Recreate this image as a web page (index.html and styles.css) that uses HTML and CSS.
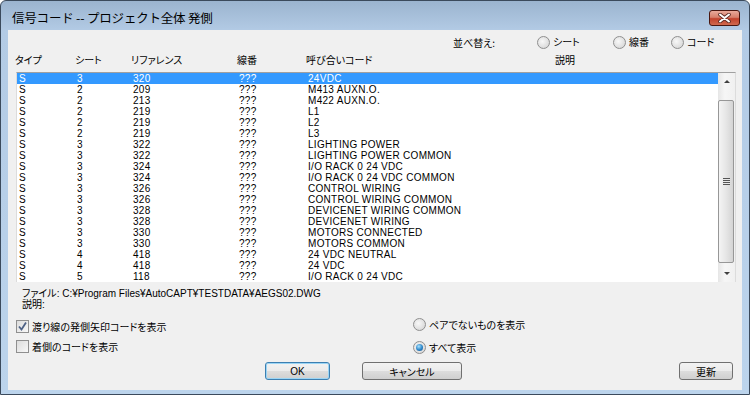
FILE: index.html
```html
<!DOCTYPE html>
<html lang="ja">
<head>
<meta charset="UTF-8">
<title>信号コード -- プロジェクト全体 発側</title>
<link rel="stylesheet" href="styles.css">
</head>
<body>
<div class="window">
    <div class="titlebar">
        <span class="title">信号コード -- プロジェクト全体 発側</span>
        <span class="close">
            <svg width="13" height="10" viewBox="0 0 13 10">
                <path d="M2 1.5 L11 8.5 M11 1.5 L2 8.5" stroke="#5a2a24" stroke-width="3.6" stroke-linecap="round"/>
                <path d="M2 1.5 L11 8.5 M11 1.5 L2 8.5" stroke="#ffffff" stroke-width="2" stroke-linecap="round"/>
            </svg>
        </span>
    </div>

    <div class="client">
        <div class="sortbar">
            <span class="sort-label">並べ替え:</span>
            <span class="radio sort-sheet"><span class="dot"></span>シート</span>
            <span class="radio sort-wire"><span class="dot"></span>線番</span>
            <span class="radio"><span class="dot"></span>コード</span>
        </div>

        <div class="cols colhead">
            <span class="first">タイプ</span>
            <span>シート</span>
            <span>リファレンス</span>
            <span>線番</span>
            <span>呼び合いコード</span>
            <span>説明</span>
        </div>

        <div class="listbox">
            <div class="rows">
                <div class="cols row selected"><span>S</span><span>3</span><span>320</span><span>???</span><span>24VDC</span><span></span></div>
                <div class="cols row"><span>S</span><span>2</span><span>209</span><span>???</span><span>M413 AUXN.O.</span><span></span></div>
                <div class="cols row"><span>S</span><span>2</span><span>213</span><span>???</span><span>M422 AUXN.O.</span><span></span></div>
                <div class="cols row"><span>S</span><span>2</span><span>219</span><span>???</span><span>L1</span><span></span></div>
                <div class="cols row"><span>S</span><span>2</span><span>219</span><span>???</span><span>L2</span><span></span></div>
                <div class="cols row"><span>S</span><span>2</span><span>219</span><span>???</span><span>L3</span><span></span></div>
                <div class="cols row"><span>S</span><span>3</span><span>322</span><span>???</span><span>LIGHTING POWER</span><span></span></div>
                <div class="cols row"><span>S</span><span>3</span><span>322</span><span>???</span><span>LIGHTING POWER COMMON</span><span></span></div>
                <div class="cols row"><span>S</span><span>3</span><span>324</span><span>???</span><span>I/O RACK 0 24 VDC</span><span></span></div>
                <div class="cols row"><span>S</span><span>3</span><span>324</span><span>???</span><span>I/O RACK 0 24 VDC COMMON</span><span></span></div>
                <div class="cols row"><span>S</span><span>3</span><span>326</span><span>???</span><span>CONTROL WIRING</span><span></span></div>
                <div class="cols row"><span>S</span><span>3</span><span>326</span><span>???</span><span>CONTROL WIRING COMMON</span><span></span></div>
                <div class="cols row"><span>S</span><span>3</span><span>328</span><span>???</span><span>DEVICENET WIRING COMMON</span><span></span></div>
                <div class="cols row"><span>S</span><span>3</span><span>328</span><span>???</span><span>DEVICENET WIRING</span><span></span></div>
                <div class="cols row"><span>S</span><span>3</span><span>330</span><span>???</span><span>MOTORS CONNECTED</span><span></span></div>
                <div class="cols row"><span>S</span><span>3</span><span>330</span><span>???</span><span>MOTORS COMMON</span><span></span></div>
                <div class="cols row"><span>S</span><span>4</span><span>418</span><span>???</span><span>24 VDC NEUTRAL</span><span></span></div>
                <div class="cols row"><span>S</span><span>4</span><span>418</span><span>???</span><span>24 VDC</span><span></span></div>
                <div class="cols row"><span>S</span><span>5</span><span>118</span><span>???</span><span>I/O RACK 0 24 VDC</span><span></span></div>
            </div>
            <div class="scrollbar">
                <div class="sb-btn"><span class="arrow up"></span></div>
                <div class="sb-track">
                    <div class="thumb"><span class="grip"></span></div>
                </div>
                <div class="sb-btn"><span class="arrow down"></span></div>
            </div>
        </div>

        <div class="fileinfo">
            <div>ファイル: C:¥Program Files¥AutoCAPT¥TESTDATA¥AEGS02.DWG</div>
            <div>説明:</div>
        </div>

        <div class="options">
            <div class="opt-left">
                <span class="check checked">
                    <span class="box">
                        <svg width="11" height="11" viewBox="0 0 11 11">
                            <path d="M2 5.5 L4.5 8.5 L9 1.5" fill="none" stroke="#4d6185" stroke-width="1.8"/>
                        </svg>
                    </span>渡り線の発側矢印コードを表示
                </span>
                <span class="check"><span class="box"></span>着側のコードを表示</span>
            </div>
            <div class="opt-right">
                <span class="radio"><span class="dot"></span>ペアでないものを表示</span>
                <span class="radio on"><span class="dot"></span>すべて表示</span>
            </div>
        </div>

        <div class="buttons">
            <span class="btn default ok">OK</span>
            <span class="btn cancel">キャンセル</span>
            <span class="btn refresh">更新</span>
        </div>
    </div>
</div>
</body>
</html>
```

FILE: styles.css
```css
body {
    margin: 0;
    background-color: #ffffff;
    font-family: "Noto Sans CJK JP", sans-serif;
    color: #000000;
}

.window {
    width: 750px;
    height: 395px;
    box-sizing: border-box;
    padding: 0 7px 4px 7px;
    border: 1px solid #3b4a5c;
    border-radius: 6px 6px 0 0;
    background: linear-gradient(#9bb4cf, #b3cbe5 30px, #bcd4ec);
    display: flex;
    flex-direction: column;
}

/* title bar */

.titlebar {
    height: 29px;
    display: flex;
    align-items: flex-start;
    justify-content: space-between;
    padding: 0 2px 0 4px;
}

.title {
    margin-top: 8px;
    font-size: 12.5px;
    line-height: 18px;
    letter-spacing: -0.2px;
}

.close {
    margin-top: 9px;
    width: 29px;
    height: 14px;
    border: 1px solid #4a1710;
    border-radius: 3px;
    background: linear-gradient(#e9a99a, #d7806c 45%, #c2422c 55%, #d06a4f);
    display: flex;
    align-items: center;
    justify-content: center;
}

/* client area */

.client {
    height: 360px;
    background-color: #f0f0f0;
    display: flex;
    flex-direction: column;
    font-size: 10px;
    font-feature-settings: "palt";
}

.sortbar {
    height: 24px;
    display: flex;
    align-items: center;
    padding-left: 445px;
}

.sort-label {
    width: 84px;
}

.sort-sheet {
    width: 76px;
}

.sort-wire {
    width: 58px;
}

.radio {
    display: flex;
    align-items: center;
    line-height: 12px;
}

.radio .dot {
    width: 11px;
    height: 11px;
    margin-right: 3px;
    border: 1px solid #8f8f8f;
    border-radius: 50%;
    background: radial-gradient(circle at 40% 40%, #f8f8f8, #dcdcdc 70%, #c9c9c9);
    position: relative;
}

.radio.on .dot::after {
    content: "";
    position: absolute;
    left: 2px;
    top: 2px;
    width: 7px;
    height: 7px;
    border-radius: 50%;
    background: radial-gradient(circle at 40% 35%, #a8e2ff, #2d86c8 55%, #1a4f86);
}

/* list */

.cols {
    display: grid;
    grid-template-columns: 58px 56px 106px 69px 249px 1fr;
}

.colhead {
    height: 18px;
    line-height: 12px;
    margin-left: 9px;
}

.colhead .first {
    margin-left: -2px;
}

.listbox {
    margin-left: 8px;
    width: 720px;
    height: 210px;
    box-sizing: border-box;
    border-top: 1px solid #a0a0a0;
    border-left: 1px solid #dcdcdc;
    border-right: 1px solid #dcdcdc;
    display: flex;
    background-color: #ffffff;
}

.rows {
    flex: 1;
}

.row {
    height: 11px;
    font-family: "Liberation Sans", sans-serif;
    font-size: 10px;
    line-height: 11px;
    letter-spacing: 0.3px;
    white-space: nowrap;
}

.row span {
    padding-left: 2px;
}

.row.selected {
    background-color: #3399ff;
    color: #ffffff;
}

.scrollbar {
    width: 17px;
    display: flex;
    flex-direction: column;
    background: linear-gradient(90deg, #e6e6e6, #f6f6f6 40%, #f0f0f0);
}

.sb-btn {
    height: 17px;
    display: flex;
    align-items: center;
    justify-content: center;
}

.arrow {
    width: 0;
    height: 0;
    border-left: 3px solid transparent;
    border-right: 3px solid transparent;
}

.arrow.up {
    border-bottom: 3px solid #404040;
}

.arrow.down {
    border-top: 3px solid #404040;
}

.sb-track {
    flex: 1;
    padding-top: 10px;
}

.thumb {
    height: 161px;
    margin: 0 1px 0 0;
    border: 1px solid #979797;
    border-radius: 2px;
    background: linear-gradient(90deg, #f4f4f4, #e6e6e6 50%, #d4d4d4);
    display: flex;
    align-items: center;
    justify-content: center;
}

.grip {
    width: 7px;
    height: 7px;
    background: repeating-linear-gradient(#555555 0, #555555 1px, #e8e8e8 1px, #e8e8e8 2px);
}

/* file info */

.fileinfo {
    margin-top: 6px;
    padding-left: 14px;
    font-family: "Liberation Sans", "Noto Sans CJK JP", sans-serif;
    line-height: 11px;
}

/* options */

.options {
    margin-top: 5px;
    display: flex;
}

.opt-left {
    width: 397px;
    padding-left: 8px;
    display: flex;
    flex-direction: column;
    gap: 7px;
    padding-top: 5px;
}

.opt-right {
    display: flex;
    flex-direction: column;
    gap: 10px;
    padding-top: 3px;
}

.check {
    display: flex;
    align-items: center;
    line-height: 13px;
    font-size: 10px;
}

.check .box {
    width: 11px;
    height: 11px;
    margin-right: 3px;
    border: 1px solid #8f8f8f;
    background: linear-gradient(135deg, #dcdcdc, #f8f8f8);
    display: flex;
    align-items: center;
    justify-content: center;
}

/* buttons */

.buttons {
    margin-top: 8px;
    display: flex;
    padding: 0 9px 0 257px;
}

.btn {
    height: 18px;
    box-sizing: border-box;
    border: 1px solid #707070;
    border-radius: 3px;
    background: linear-gradient(#f2f2f2, #ebebeb 50%, #dddddd 50%, #cfcfcf);
    display: flex;
    align-items: center;
    justify-content: center;
    font-size: 10px;
}

.btn.default {
    border-color: #3c7fb1;
    box-shadow: inset 0 0 0 1px #9bd5f5;
}

.ok {
    width: 65px;
    font-family: "Liberation Sans", sans-serif;
}

.cancel {
    width: 100px;
    margin-left: 32px;
}

.refresh {
    width: 54px;
    margin-left: auto;
}
```
